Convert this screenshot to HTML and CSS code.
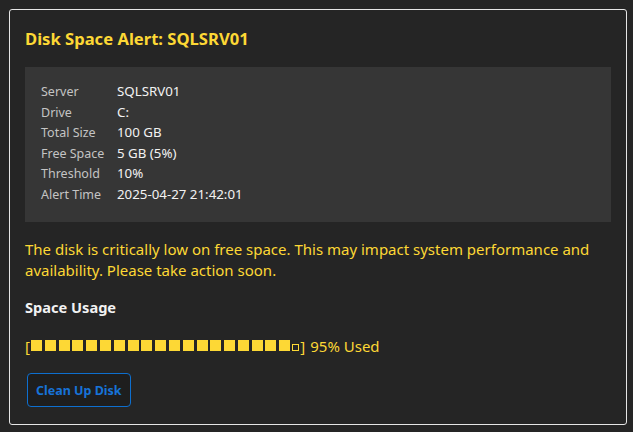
FILE: index.html
```html
<!DOCTYPE html>
<html>
<head>
<meta charset="utf-8">
<link rel="stylesheet" href="styles.css">
</head>
<body>
<div class="card">
  <h2 class="title">Disk Space Alert: SQLSRV01</h2>
  <div class="details">
    <div class="row"><span class="label">Server</span><span class="value">SQLSRV01</span></div>
    <div class="row"><span class="label">Drive</span><span class="value">C:</span></div>
    <div class="row"><span class="label">Total Size</span><span class="value">100 GB</span></div>
    <div class="row"><span class="label">Free Space</span><span class="value">5 GB (5%)</span></div>
    <div class="row"><span class="label">Threshold</span><span class="value">10%</span></div>
    <div class="row"><span class="label">Alert Time</span><span class="value">2025-04-27 21:42:01</span></div>
  </div>
  <p class="message">The disk is critically low on free space. This may impact system performance and availability. Please take action soon.</p>
  <h3 class="section">Space Usage</h3>
  <div class="bar"><span class="br">[</span><span class="sq"></span><span class="sq"></span><span class="sq"></span><span class="sq"></span><span class="sq"></span><span class="sq"></span><span class="sq"></span><span class="sq"></span><span class="sq"></span><span class="sq"></span><span class="sq"></span><span class="sq"></span><span class="sq"></span><span class="sq"></span><span class="sq"></span><span class="sq"></span><span class="sq"></span><span class="sq"></span><span class="sq last"></span><span class="empty"></span><span class="br">]</span><span class="pct">95% Used</span></div>
  <button class="btn">Clean Up Disk</button>
</div>
</body>
</html>
```
FILE: styles.css
```css
html, body {
  background: #252525;
}
body {
  margin: 9px 6px 7px 9px;
  font-family: "Segoe UI", "Noto Sans", "Open Sans", sans-serif;
  color: #f0f0f0;
}
.card {
  border: 1px solid #e6e6e6;
  border-radius: 3px;
  padding: 15px;
  box-sizing: border-box;
  height: 416px;
}
.title {
  margin: 0;
  font-size: 16.6px;
  line-height: 26px;
  font-weight: 700;
  color: #fdd835;
  padding-top: 1px;
}
.details {
  margin-top: 15px;
  background: #363636;
  padding: 14px 16px 15px 16px;
  height: 155px;
  box-sizing: border-box;
}
.row {
  display: flex;
  align-items: baseline;
  font-size: 12.5px;
  height: 20.6px;
  line-height: 20.6px;
}
.label {
  width: 76px;
  flex: none;
  color: #c4c4c4;
}
.value {
  color: #f2f2f2;
  font-size: 13.3px;
}
.message {
  margin: 17px 0 0 0;
  font-size: 15px;
  line-height: 21px;
  color: #fdd835;
}
.section {
  margin: 16px 0 0 0;
  font-size: 14.6px;
  line-height: 21px;
  font-weight: 700;
  color: #f2f2f2;
}
.bar {
  margin-top: 17px;
  display: flex;
  align-items: center;
  height: 21px;
  font-size: 15px;
  color: #fdd835;
}
.br {
  margin-right: 1px;
}
.sq {
  width: 11px;
  height: 11px;
  background: #fdd835;
  margin-right: 2.8px;
  flex: none;
}
.sq.last {
  margin-right: 2px;
}
.empty {
  width: 5px;
  height: 5px;
  border: 1px solid #fdd835;
  margin-top: 4px;
  margin-right: 1px;
  flex: none;
}
.pct {
  margin-left: 4px;
}
.btn {
  margin-top: 17px;
  margin-left: 2px;
  height: 34px;
  padding: 0 8px;
  background: #1e1e1e;
  border: 1px solid #0e6fcf;
  border-radius: 4px;
  color: #1773d8;
  font-family: inherit;
  font-size: 12.5px;
  font-weight: 700;
}
```
